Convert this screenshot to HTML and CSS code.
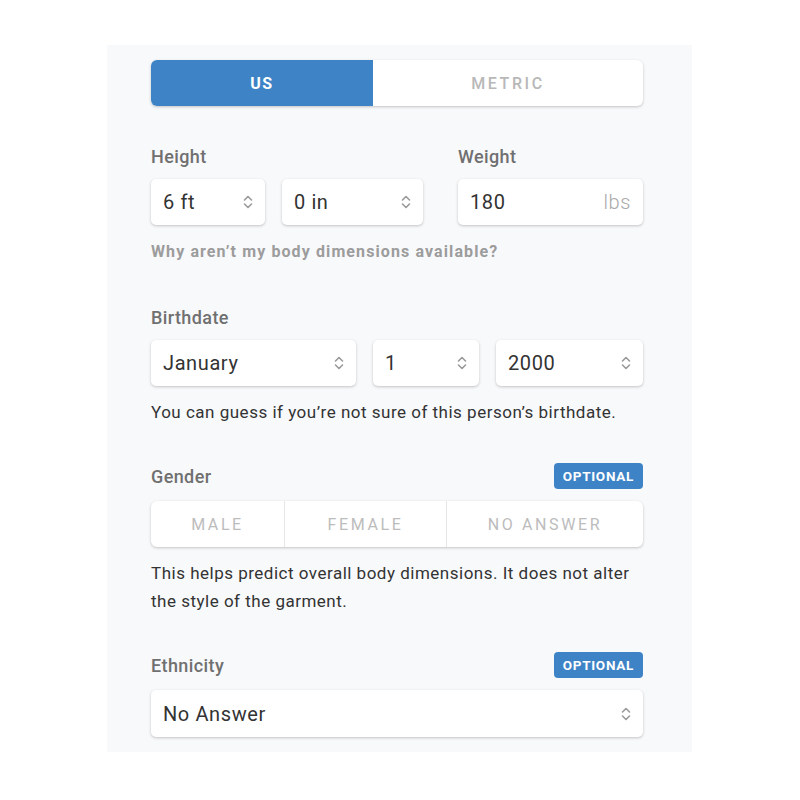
FILE: index.html
```html
<!DOCTYPE html>
<html lang="en">
<head>
  <meta charset="UTF-8" />
  <title>Body Profile</title>
  <link rel="stylesheet" href="styles.css">
</head>
<body>
  <div class="panel">
    <div class="units">
      <div class="unit active">US</div>
      <div class="unit">METRIC</div>
    </div>

    <div class="row-fields first">
      <div class="field height">
        <div class="label-row"><span class="label">Height</span></div>
        <div class="controls">
          <div class="select ft"><span>6 ft</span>
            <svg class="chev" width="10" height="16" viewBox="0 0 10 16"><path d="M1.5 6 L5 2.5 L8.5 6 M1.5 10 L5 13.5 L8.5 10" /></svg>
          </div>
          <div class="select in"><span>0 in</span>
            <svg class="chev" width="10" height="16" viewBox="0 0 10 16"><path d="M1.5 6 L5 2.5 L8.5 6 M1.5 10 L5 13.5 L8.5 10" /></svg>
          </div>
        </div>
      </div>
      <div class="field weight">
        <div class="label-row"><span class="label">Weight</span></div>
        <div class="select"><span>180</span><span class="unit-suffix">lbs</span></div>
      </div>
    </div>
    <p class="link-note">Why aren’t my body dimensions available?</p>

    <div class="field section">
      <div class="label-row"><span class="label">Birthdate</span></div>
      <div class="controls">
        <div class="select month"><span>January</span>
          <svg class="chev" width="10" height="16" viewBox="0 0 10 16"><path d="M1.5 6 L5 2.5 L8.5 6 M1.5 10 L5 13.5 L8.5 10" /></svg>
        </div>
        <div class="select day"><span>1</span>
          <svg class="chev" width="10" height="16" viewBox="0 0 10 16"><path d="M1.5 6 L5 2.5 L8.5 6 M1.5 10 L5 13.5 L8.5 10" /></svg>
        </div>
        <div class="select year"><span>2000</span>
          <svg class="chev" width="10" height="16" viewBox="0 0 10 16"><path d="M1.5 6 L5 2.5 L8.5 6 M1.5 10 L5 13.5 L8.5 10" /></svg>
        </div>
      </div>
      <p class="help">You can guess if you’re not sure of this person’s birthdate.</p>
    </div>

    <div class="field section">
      <div class="label-row"><span class="label">Gender</span><span class="badge">OPTIONAL</span></div>
      <div class="segments">
        <div class="seg male">MALE</div>
        <div class="seg female">FEMALE</div>
        <div class="seg none">NO ANSWER</div>
      </div>
      <p class="help">This helps predict overall body dimensions. It does not alter the style of the garment.</p>
    </div>

    <div class="field section">
      <div class="label-row"><span class="label">Ethnicity</span><span class="badge">OPTIONAL</span></div>
      <div class="select wide"><span>No Answer</span>
        <svg class="chev" width="10" height="16" viewBox="0 0 10 16"><path d="M1.5 6 L5 2.5 L8.5 6 M1.5 10 L5 13.5 L8.5 10" /></svg>
      </div>
    </div>
  </div>
</body>
</html>
```

FILE: styles.css
```css
body {
  margin: 0;
  background-color: #ffffff;
  font-family: Roboto, "Liberation Sans", sans-serif;
  color: #333;
}
.panel {
  width: 492px;
  margin: 45px 0 0 107px;
  padding: 15px 49px 15px 44px;
  background-color: #f8f9fb;
}
.units {
  display: flex;
  height: 46px;
  border-radius: 6px;
  overflow: hidden;
  background-color: white;
  box-shadow: 0 1px 3px rgba(0, 0, 0, 0.22);
}
.unit {
  flex: 1;
  display: flex;
  align-items: center;
  justify-content: center;
  font-size: 16px;
  font-weight: 500;
  letter-spacing: 2.6px;
  color: #b8b8b8;
}
.unit.active {
  flex: 0 0 222px;
  background-color: #3d83c6;
  color: white;
  font-weight: 700;
  letter-spacing: 1.5px;
}
.row-fields {
  display: flex;
  gap: 35px;
  margin-top: 39px;
}
.field.height {
  width: 272px;
}
.field.weight {
  flex: 1;
}
.label-row {
  display: flex;
  justify-content: space-between;
  align-items: center;
  min-height: 22px;
  margin-bottom: 12px;
}
.label {
  font-size: 18px;
  font-weight: 500;
  letter-spacing: 0.4px;
  color: #707070;
}
.badge {
  background-color: #3d83c6;
  color: white;
  font-size: 13.5px;
  font-weight: 700;
  letter-spacing: 0.7px;
  padding: 0 9px;
  height: 26px;
  line-height: 26px;
  border-radius: 4px;
}
.controls {
  display: flex;
  gap: 17px;
}
.select {
  display: flex;
  align-items: center;
  justify-content: space-between;
  height: 46px;
  padding: 0 12px;
  box-sizing: border-box;
  background-color: white;
  border-radius: 5px;
  box-shadow: 0 1px 3px rgba(0, 0, 0, 0.22);
  font-size: 20px;
  letter-spacing: 0.6px;
  color: #333;
}
.select.ft { width: 114px; }
.select.in { width: 141px; }
.select.month { width: 205px; }
.select.day { width: 106px; }
.select.year { flex: 1; }
.select.wide { height: 47px; }
.chev {
  fill: none;
  stroke: #9a9a9a;
  stroke-width: 1.6;
  stroke-linecap: round;
  stroke-linejoin: round;
}
.unit-suffix {
  color: #a8a8a8;
  font-weight: 300;
}
.link-note {
  margin: 17px 0 0;
  font-size: 16px;
  line-height: 20px;
  font-weight: 700;
  letter-spacing: 1.1px;
  color: #9c9c9c;
}
.section {
  margin-top: 44px;
}
.section + .section {
  margin-top: 37px;
}
.help {
  margin: 12px 0 0;
  font-size: 17px;
  line-height: 28px;
  letter-spacing: 0.5px;
  color: #333;
}
.segments {
  display: flex;
  height: 46px;
  background-color: white;
  border-radius: 6px;
  box-shadow: 0 1px 3px rgba(0, 0, 0, 0.22);
}
.seg {
  display: flex;
  align-items: center;
  justify-content: center;
  font-size: 16px;
  letter-spacing: 2.6px;
  color: #bcbcbc;
}
.seg + .seg {
  border-left: 1px solid #e6e6e6;
}
.seg.male { width: 133px; }
.seg.female { width: 161px; }
.seg.none { flex: 1; }
```
